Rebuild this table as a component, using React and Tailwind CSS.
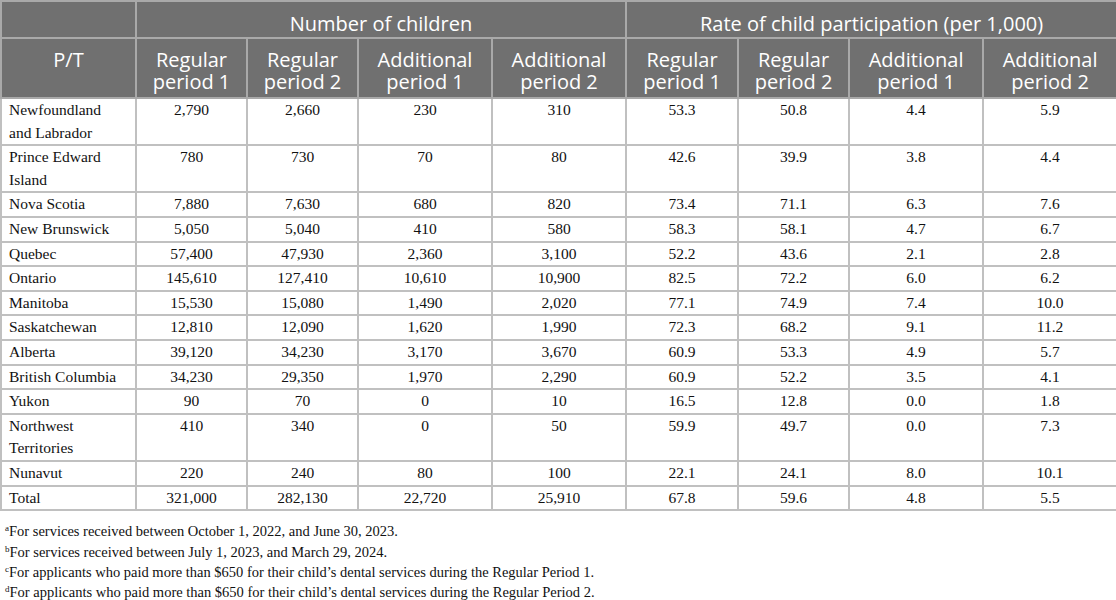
import React from "react";

const rows = [
  [["Newfoundland", "and Labrador"], "2,790", "2,660", "230", "310", "53.3", "50.8", "4.4", "5.9"],
  [["Prince Edward", "Island"], "780", "730", "70", "80", "42.6", "39.9", "3.8", "4.4"],
  ["Nova Scotia", "7,880", "7,630", "680", "820", "73.4", "71.1", "6.3", "7.6"],
  ["New Brunswick", "5,050", "5,040", "410", "580", "58.3", "58.1", "4.7", "6.7"],
  ["Quebec", "57,400", "47,930", "2,360", "3,100", "52.2", "43.6", "2.1", "2.8"],
  ["Ontario", "145,610", "127,410", "10,610", "10,900", "82.5", "72.2", "6.0", "6.2"],
  ["Manitoba", "15,530", "15,080", "1,490", "2,020", "77.1", "74.9", "7.4", "10.0"],
  ["Saskatchewan", "12,810", "12,090", "1,620", "1,990", "72.3", "68.2", "9.1", "11.2"],
  ["Alberta", "39,120", "34,230", "3,170", "3,670", "60.9", "53.3", "4.9", "5.7"],
  ["British Columbia", "34,230", "29,350", "1,970", "2,290", "60.9", "52.2", "3.5", "4.1"],
  ["Yukon", "90", "70", "0", "10", "16.5", "12.8", "0.0", "1.8"],
  [["Northwest", "Territories"], "410", "340", "0", "50", "59.9", "49.7", "0.0", "7.3"],
  ["Nunavut", "220", "240", "80", "100", "22.1", "24.1", "8.0", "10.1"],
  ["Total", "321,000", "282,130", "22,720", "25,910", "67.8", "59.6", "4.8", "5.5"],
];

const subHeads = [
  ["Regular", "period 1"],
  ["Regular", "period 2"],
  ["Additional", "period 1"],
  ["Additional", "period 2"],
  ["Regular", "period 1"],
  ["Regular", "period 2"],
  ["Additional", "period 1"],
  ["Additional", "period 2"],
];

const widths = [135, 111, 111, 134, 134, 112, 111, 134, 134];

const notes = [
  ["a", "For services received between October 1, 2022, and June 30, 2023."],
  ["b", "For services received between July 1, 2023, and March 29, 2024."],
  ["c", "For applicants who paid more than $650 for their child’s dental services during the Regular Period 1."],
  ["d", "For applicants who paid more than $650 for their child’s dental services during the Regular Period 2."],
];

export default function App() {
  const serif = { fontFamily: '"Liberation Serif", "Times New Roman", serif' };
  const sans = { fontFamily: '"Open Sans", "Noto Sans", sans-serif' };
  return (
    <div className="w-[1116px] h-[600px] bg-white overflow-hidden">
      <table className="border-collapse w-[1116px] table-fixed">
        <colgroup>
          {widths.map((w, i) => (
            <col key={i} style={{ width: w }} />
          ))}
        </colgroup>
        <thead style={sans} className="text-white bg-[#707070]">
          <tr className="h-[37px]">
            <th className="border-2 border-[#a9a9a9] font-normal"></th>
            <th colSpan={4} className="border-2 border-[#a9a9a9] font-normal text-[20px] leading-[22px] pt-[11px] pb-0 align-top">
              Number of children
            </th>
            <th colSpan={4} className="border-2 border-[#a9a9a9] font-normal text-[20px] leading-[22px] pt-[11px] pb-0 align-top">
              Rate of child participation (per 1,000)
            </th>
          </tr>
          <tr className="h-[60px]">
            <th className="border-2 border-[#a9a9a9] font-normal text-[20px] leading-[22px] align-top pt-[10px]">P/T</th>
            {subHeads.map((h, i) => (
              <th key={i} className="border-2 border-[#a9a9a9] font-normal text-[20px] leading-[22px] align-top pt-[10px] pb-[3px]">
                <div className="leading-[22px]">{h[0]}</div>
                <div className="leading-[22px]">{h[1]}</div>
              </th>
            ))}
          </tr>
        </thead>
        <tbody style={serif} className="text-[15.5px] leading-[22.6px] text-[#111]">
          {rows.map((r, i) => (
            <tr key={i}>
              {r.map((c, j) => (
                <td
                  key={j}
                  className={
                    "border-2 border-[#c0c0c0] align-top p-0 " +
                    (j === 0 ? "text-left pl-[7px] pr-[4px]" : "text-center")
                  }
                >
                  {Array.isArray(c) ? (
                    <>
                      <div>{c[0]}</div>
                      <div>{c[1]}</div>
                    </>
                  ) : (
                    c
                  )}
                </td>
              ))}
            </tr>
          ))}
        </tbody>
      </table>
      <div style={serif} className="text-[14.5px] leading-[20.4px] text-[#111] pt-[10px] pl-[5px]">
        {notes.map(([s, t]) => (
          <div key={s}>
            <span className="text-[9px] leading-none relative top-[-5px]">{s}</span>
            {t}
          </div>
        ))}
      </div>
    </div>
  );
}
